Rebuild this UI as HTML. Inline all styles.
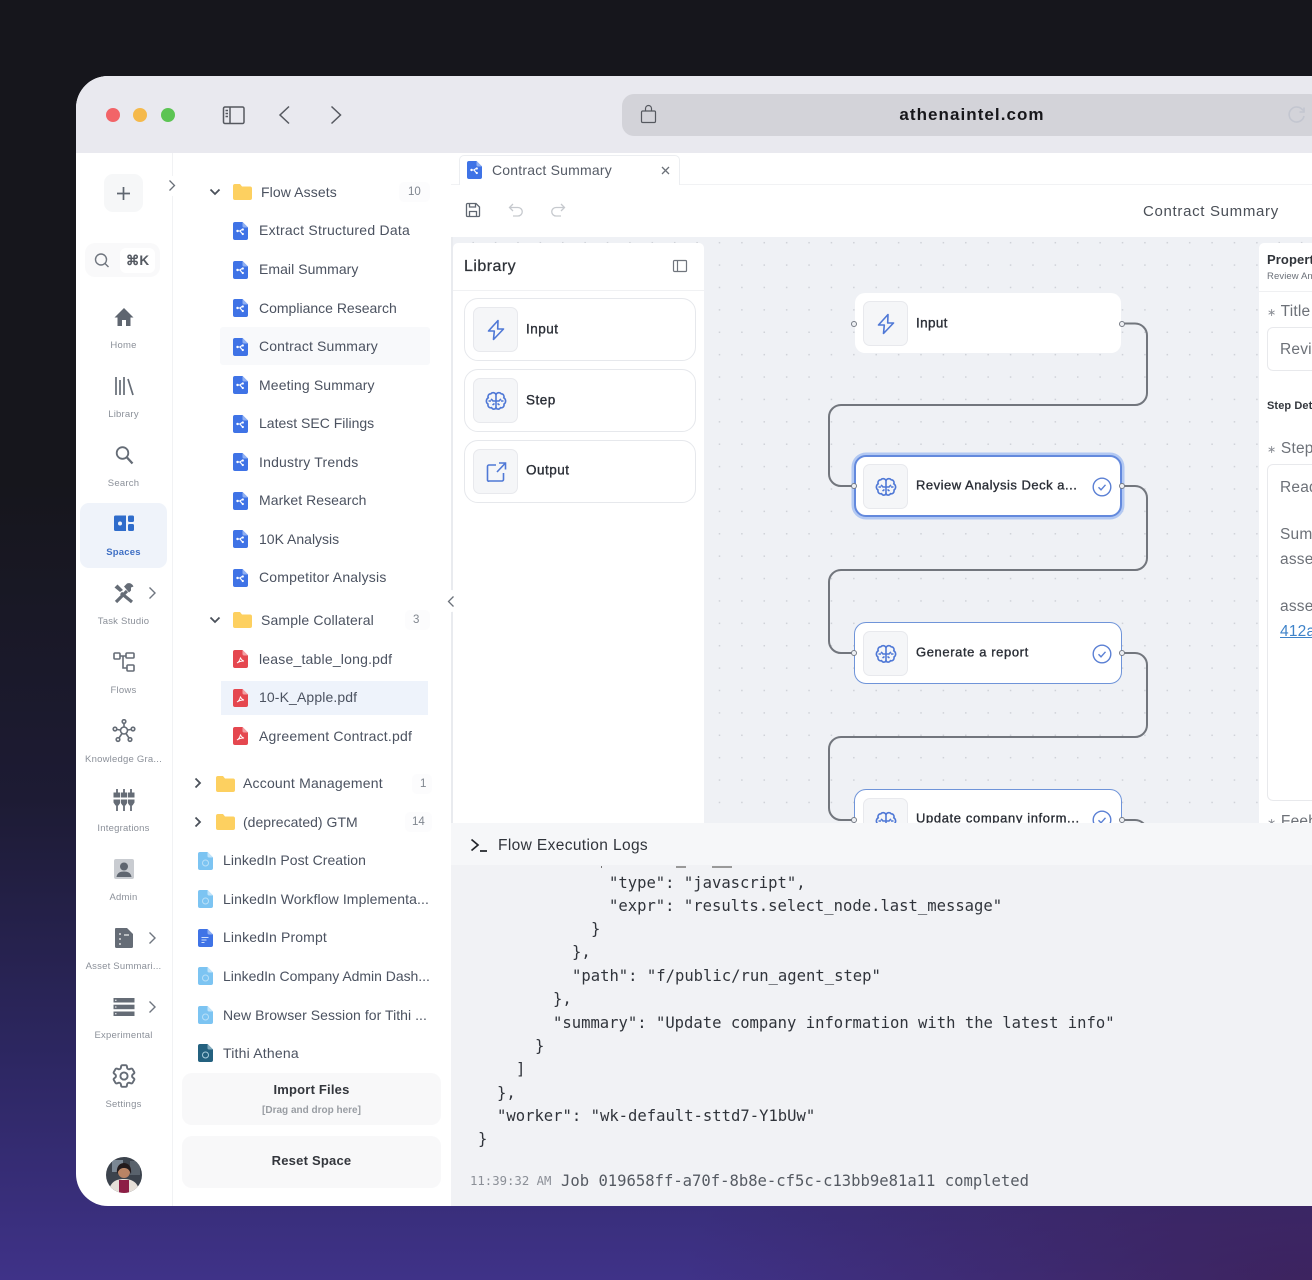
<!DOCTYPE html>
<html><head><meta charset="utf-8"><style>
*{box-sizing:border-box;margin:0;padding:0}
html,body{width:1312px;height:1280px;overflow:hidden;background:#16161c}
body{position:relative;font-family:"Liberation Sans",sans-serif;
background:radial-gradient(900px 420px at 1312px 1290px,rgba(60,30,80,.75),rgba(60,30,80,0) 70%),linear-gradient(180deg,#16161c 0,#16161c 480px,#1d1b34 800px,#2d2762 1060px,#3f3288 1280px)}
.a{position:absolute}
#win{position:absolute;left:76px;top:76px;width:1236px;height:1130px;border-radius:32px 0 0 32px;overflow:hidden;background:#fff}
#page{position:absolute;left:-76px;top:-76px;width:1312px;height:1280px;filter:blur(.3px)}
.t{position:absolute;white-space:nowrap;line-height:20px;height:20px;transform:translateY(-10px);font-size:14px;letter-spacing:.1px;color:#4b5260}
.lb{position:absolute;white-space:nowrap;font-size:9.5px;letter-spacing:.22px;line-height:12px;color:#8b9099;transform:translate(-50%,-5px);left:123.5px}
.ni{position:absolute;left:111.5px;width:24px;height:24px;transform:translateY(-12px);fill:none;stroke:#656c76;stroke-width:1.6}
.ch{position:absolute;width:12px;height:12px;transform:translateY(-6px);fill:none;stroke:#4a505a;stroke-width:1.8}
.nc{position:absolute;left:147px;width:10px;height:14px;transform:translateY(-7px);fill:none;stroke:#6f7680;stroke-width:1.4}
.f{position:absolute;width:15px;height:18px;transform:translateY(-9px)}
.fo{position:absolute;width:19px;height:16px;transform:translateY(-8px)}
.c{position:absolute;font-size:11.5px;line-height:14px;color:#80868f;transform:translateY(-7px)}
.chip{position:absolute;height:20px;background:#fcfcfd;border-radius:5px;transform:translateY(-10px)}
.lib{position:absolute;left:464px;width:232px;height:63px;border:1px solid #e6e8ec;border-radius:14px;background:#fff}
.box{position:absolute;width:45px;height:45px;background:#f5f6f8;border:1px solid #e8e9ed;border-radius:7px}
.box svg{position:absolute;left:10px;top:10px;width:24px;height:24px;fill:none;stroke:#4f78d6;stroke-width:1.6}
.bt{position:absolute;white-space:nowrap;font-size:13.5px;letter-spacing:.5px;color:#2a2e36;line-height:20px;transform:translateY(-9.5px);-webkit-text-stroke:.35px #2a2e36}
.node{position:absolute;left:854px;width:268px;height:62px;background:#fff;border:1px solid #6f94d9;border-radius:12px}
.h{position:absolute;width:6px;height:6px;border-radius:50%;background:#eef0f4;border:1.4px solid #777c85;transform:translate(-50%,-50%)}
.ok{position:absolute;left:1092px;width:20px;height:20px;transform:translateY(-10px);fill:none;stroke:#5b80d4;stroke-width:1.4}
.log{position:absolute;white-space:pre;font-family:"DejaVu Sans Mono",monospace;font-size:15.55px;line-height:20px;height:20px;transform:translateY(-10px);color:#30343b}
.p{position:absolute;white-space:nowrap;font-size:15.5px;letter-spacing:.2px;color:#6d7178;line-height:20px;transform:translateY(-9px)}
</style></head><body>
<svg width="0" height="0" style="position:absolute"><defs>
<symbol id="doc" viewBox="0 0 15 18"><path d="M2 0h7.500L15 5.500V16a2 2 0 0 1-2 2H2a2 2 0 0 1-2-2V2a2 2 0 0 1 2-2z" fill="#3f73e6"/><path d="M9.500 0L15 5.500H11a1.500 1.500 0 0 1-1.500-1.500z" fill="#8fb0f3"/><path d="M4.500 9h2.500l2 -1.500M7 9l2 2.500" stroke="#fff" stroke-width="1.100" fill="none"/><circle cx="4.500" cy="9" r="1.200" fill="#fff"/><circle cx="9.800" cy="7.500" r="1.100" fill="#fff"/><circle cx="9.800" cy="12" r="1.100" fill="#fff"/></symbol>
<symbol id="pdf" viewBox="0 0 15 18"><path d="M2 0h7.500L15 5.500V16a2 2 0 0 1-2 2H2a2 2 0 0 1-2-2V2a2 2 0 0 1 2-2z" fill="#e5474f"/><path d="M9.500 0L15 5.500H11a1.500 1.500 0 0 1-1.500-1.500z" fill="#f3a0a4"/><path d="M4 13c2-1 3-3 3.500-5.500.5 2 1.500 3 3.500 3.500-2.500 0-5 .5-7 2z" stroke="#fff" stroke-width=".9" fill="none"/></symbol>
<symbol id="lt" viewBox="0 0 15 18"><path d="M2 0h7.500L15 5.500V16a2 2 0 0 1-2 2H2a2 2 0 0 1-2-2V2a2 2 0 0 1 2-2z" fill="#7cc4f2"/><path d="M9.500 0L15 5.500H11a1.500 1.500 0 0 1-1.500-1.500z" fill="#c2e4fa"/><circle cx="7.500" cy="11" r="3" fill="none" stroke="#b9e0f8" stroke-width="1"/></symbol>
<symbol id="pr" viewBox="0 0 15 18"><path d="M2 0h7.500L15 5.500V16a2 2 0 0 1-2 2H2a2 2 0 0 1-2-2V2a2 2 0 0 1 2-2z" fill="#3f73e6"/><path d="M9.500 0L15 5.500H11a1.500 1.500 0 0 1-1.500-1.500z" fill="#8fb0f3"/><path d="M3.500 8.500h7M3.500 11h5M3.500 13.500h3" stroke="#cfe0fb" stroke-width="1"/></symbol>
<symbol id="tt" viewBox="0 0 15 18"><path d="M2 0h7.500L15 5.500V16a2 2 0 0 1-2 2H2a2 2 0 0 1-2-2V2a2 2 0 0 1 2-2z" fill="#24617f"/><path d="M9.500 0L15 5.500H11a1.500 1.500 0 0 1-1.500-1.500z" fill="#7fa9bd"/><circle cx="7.500" cy="11" r="3" fill="none" stroke="#a8cddd" stroke-width="1"/></symbol>
<symbol id="folder" viewBox="0 0 19 16"><path d="M2 0h5l2 2.500h8a2 2 0 0 1 2 2V14a2 2 0 0 1-2 2H2a2 2 0 0 1-2-2V2a2 2 0 0 1 2-2z" fill="#fdd060"/></symbol>
<symbol id="bolt" viewBox="0 0 24 24"><path d="M14 2.500L4.500 13h5.800L9.500 21.500 19.500 11h-5.800z" stroke-linejoin="round"/></symbol>
<symbol id="brain" viewBox="0 0 24 24"><path d="M12 5.500C11 3.500 8 3 6.800 4.800 4.500 4.800 3.500 7 4.200 8.800 2 10 1.600 13.500 4 15c-.5 2.500 1.500 4.300 3.500 3.700C8.800 20.800 11.500 20.500 12 18.500c.5 2 3.200 2.300 4.500.2 2 .6 4-1.200 3.500-3.700 2.400-1.500 2-5-.2-6.200.7-1.800-.3-4-2.600-4C16 3 13 3.500 12 5.500z"/><path d="M12 5.500v13M12 12H9L7 10M12 12h3l2-2M4.500 12H7M19.500 12H17M8.500 16l2-1.500M15.500 16l-2-1.500"/></symbol>
<symbol id="out" viewBox="0 0 24 24"><path d="M12 5H5a1.500 1.500 0 0 0-1.500 1.500V20A1 1 0 0 0 5 21h13a1.500 1.500 0 0 0 1.500-1.500V13M13 12L21 3.500M15 3h6.500v6.500"/></symbol>
<symbol id="check" viewBox="0 0 20 20"><circle cx="10" cy="10" r="8.800"/><path d="M6.500 10.300l2.500 2.500 4.500-5"/></symbol>
</defs></svg>
<div id="win"><div id="page">

<!-- browser chrome -->
<div class="a" style="left:76px;top:76px;width:1236px;height:77px;background:#e9e9ef"></div>
<div class="a" style="left:106px;top:108px;width:14px;height:14px;border-radius:50%;background:#f26468"></div>
<div class="a" style="left:133px;top:108px;width:14px;height:14px;border-radius:50%;background:#f5b94b"></div>
<div class="a" style="left:161px;top:108px;width:14px;height:14px;border-radius:50%;background:#5cc453"></div>
<svg class="a" style="left:222px;top:105px" width="24" height="20" fill="none" stroke="#55585f" stroke-width="1.500"><rect x="1.500" y="2" width="20.500" height="16.500" rx="1.500"/><path d="M8 2v16.500M3.500 5.500h2.500M3.500 8.500h2.500M3.500 11.500h2.500"/></svg>
<svg class="a" style="left:277px;top:104px" width="14" height="22" fill="none" stroke="#55585f" stroke-width="1.500"><path d="M12 2.500L3 11l9 8.500"/></svg>
<svg class="a" style="left:329px;top:104px" width="14" height="22" fill="none" stroke="#55585f" stroke-width="1.500"><path d="M2.500 2.500l9 8.500-9 8.500"/></svg>
<div class="a" style="left:622px;top:94px;width:700px;height:42px;border-radius:12px;background:#d3d3d9"></div>
<svg class="a" style="left:640px;top:104px" width="17" height="20" fill="none" stroke="#55585f" stroke-width="1.200"><rect x="1.500" y="7" width="14" height="11.500" rx="1.200"/><path d="M5.500 7V4.500a3 3 0 0 1 6 0V7"/></svg>
<div class="a" style="left:872px;top:104px;width:200px;height:22px;text-align:center;font-size:17px;line-height:22px;font-weight:700;letter-spacing:1.050px;color:#17171b">athenaintel.com</div>
<svg class="a" style="left:1287px;top:106px" width="20" height="18" fill="none" stroke="#c3c6d0" stroke-width="1.600"><path d="M16 4.500A7.500 7.500 0 1 0 17 10M17 1.500V6h-4.500"/></svg>

<!-- sidebar -->
<div class="a" style="left:172px;top:153px;width:1px;height:1053px;background:#f1f2f4"></div>
<div class="a" style="left:104px;top:174px;width:39px;height:38px;border-radius:9px;background:#f6f7f8"></div>
<svg class="a" style="left:116px;top:186px" width="15" height="15" stroke="#5f6670" stroke-width="1.700"><path d="M7.500 1v13M1 7.500h13"/></svg>
<div class="a" style="left:166px;top:176px;width:14px;height:20px;background:#fff;border-radius:7px"></div>
<svg class="a" style="left:168px;top:179px" width="8" height="13" fill="none" stroke="#6a7079" stroke-width="1.300"><path d="M1.500 1.500l5 5-5 5"/></svg>
<div class="a" style="left:85px;top:243px;width:75px;height:34px;border-radius:10px;background:#f9f9fa"></div>
<div class="a" style="left:120px;top:248px;width:35px;height:25px;border-radius:6px;background:#fff"></div>
<svg class="a" style="left:94px;top:252px" width="16" height="17" fill="none" stroke="#70767f" stroke-width="1.400"><circle cx="7" cy="7.500" r="5.500"/><path d="M11 11.500l3.500 3.500"/></svg>
<div class="a" style="left:120px;top:252px;width:35px;text-align:center;font-size:13.5px;line-height:18px;font-weight:700;color:#555a62">⌘K</div>

<div class="a" style="left:80px;top:503px;width:87px;height:65px;border-radius:9px;background:#eff3fa"></div>

<svg class="ni" style="top:317px" viewBox="0 0 24 24"><path d="M12 3L2.500 12.500H5.500V21H10v-6h4v6h4.500v-8.500h3z" fill="#5f6670" stroke="none"/></svg>
<div class="lb" style="top:345px">Home</div>
<svg class="ni" style="top:386px" viewBox="0 0 24 24"><path d="M4 3v18M8 6v15M12 3v18M16 5l5 16" stroke-width="1.700"/></svg>
<div class="lb" style="top:414px">Library</div>
<svg class="ni" style="top:455px" viewBox="0 0 24 24"><circle cx="10.500" cy="10" r="5.800" stroke-width="1.800"/><path d="M15 14.500l5.500 6" stroke-width="2.300"/></svg>
<div class="lb" style="top:483px">Search</div>
<svg class="ni" style="top:524px" viewBox="0 0 24 24"><path d="M2 5a1.500 1.500 0 0 1 1.500-1.500H14V19H3.500A1.500 1.500 0 0 1 2 17.500z" fill="#2f6ccb" stroke="none"/><circle cx="8" cy="11.500" r="2" fill="#eff3fa" stroke="none"/><rect x="16" y="3.500" width="6" height="6.500" rx="1.500" fill="#2f6ccb" stroke="none"/><rect x="16" y="12" width="6" height="7" rx="1.500" fill="#2f6ccb" stroke="none"/></svg>
<div class="lb" style="top:552px;color:#3f6fc4;font-weight:700">Spaces</div>
<svg class="ni" style="top:593px" viewBox="0 0 24 24"><path d="M4 21L15 10" stroke-width="3.200"/><path d="M11 9L5.500 3.500 2.500 6.500 8 11" fill="#656c76" stroke="none"/><path d="M9 12L20 21" stroke-width="3.200"/><path d="M12 5.500l3-3c2-.8 5-.2 6.500 3l-2.500 1v3l-2 2-5-6z" fill="#656c76" stroke="none"/></svg>
<svg class="nc" style="top:593px" viewBox="0 0 10 14"><path d="M2.500 1.500l5.500 5.500-5.500 5.500"/></svg>
<div class="lb" style="top:621px">Task Studio</div>
<svg class="ni" style="top:662px" viewBox="0 0 24 24" stroke-width="1.500"><rect x="2" y="3" width="6" height="6" rx="1"/><rect x="14" y="3" width="8" height="5" rx="1"/><rect x="15" y="15" width="7" height="6" rx="1"/><path d="M8 6h6M11 6v12h4"/></svg>
<div class="lb" style="top:690px">Flows</div>
<svg class="ni" style="top:731px" viewBox="0 0 24 24" stroke-width="1.500"><circle cx="12" cy="11.500" r="3.500"/><circle cx="12" cy="2.500" r="1.800"/><circle cx="3" cy="10" r="1.800"/><circle cx="21" cy="10" r="1.800"/><circle cx="6" cy="20.500" r="1.800"/><circle cx="18" cy="20.500" r="1.800"/><path d="M12 4.500v3.500M5 10.500l3.500 .5M19 10.500l-3.500 .5M7 19l3-4.500M17 19l-3-4.500"/></svg>
<div class="lb" style="top:759px">Knowledge Gra...</div>
<svg class="ni" style="top:800px" viewBox="0 0 24 24"><path d="M5 1v5M12 1v5M19 1v5M5 17v6M12 17v6M19 17v6" stroke-width="1.800"/><path d="M1.500 4.500h7v5h-7zM8.500 4.500h7v5h-7zM15.500 4.500h7v5h-7z" fill="#656c76" stroke="none"/><path d="M1.500 11.500h7v3l-2 3h-3l-2-3zM8.500 11.500h7v3l-2 3h-3l-2-3zM15.500 11.500h7v3l-2 3h-3l-2-3z" fill="#656c76" stroke="none"/><path d="M8.500 4.500v13M15.500 4.500v13" stroke="#fff" stroke-width=".8"/></svg>
<div class="lb" style="top:828px">Integrations</div>
<svg class="ni" style="top:869px" viewBox="0 0 24 24"><rect x="2" y="2" width="20" height="20" rx="2" fill="#c9ccd1" stroke="none"/><circle cx="12" cy="9.500" r="4" fill="#5f6670" stroke="none"/><path d="M4.500 20c.5-4 3.500-5.500 7.500-5.500s7 1.500 7.500 5.500z" fill="#5f6670" stroke="none"/></svg>
<div class="lb" style="top:897px">Admin</div>
<svg class="ni" style="top:938px" viewBox="0 0 24 24"><path d="M4 2h11l6 6v12.500A1.500 1.500 0 0 1 19.500 22h-15A1.500 1.500 0 0 1 3 20.500V3A1 1 0 0 1 4 2z" fill="#656c76" stroke="none"/><path d="M8 7v2M8 12v2M8 17v2M12 9h5" stroke="#eee" stroke-width="1.300"/></svg>
<svg class="nc" style="top:938px" viewBox="0 0 10 14"><path d="M2.500 1.500l5.500 5.500-5.500 5.500"/></svg>
<div class="lb" style="top:966px">Asset Summari...</div>
<svg class="ni" style="top:1007px" viewBox="0 0 24 24"><rect x="1.500" y="3" width="21" height="4.500" fill="#656c76" stroke="none"/><rect x="1.500" y="9.700" width="21" height="4.500" fill="#656c76" stroke="none"/><rect x="1.500" y="16.500" width="21" height="4.500" fill="#656c76" stroke="none"/><path d="M3 5.200h1.500M3 12h1.500M3 18.700h1.500" stroke="#fff" stroke-width="1"/></svg>
<svg class="nc" style="top:1007px" viewBox="0 0 10 14"><path d="M2.500 1.500l5.500 5.500-5.500 5.500"/></svg>
<div class="lb" style="top:1035px">Experimental</div>
<svg class="ni" style="top:1076px" viewBox="2 2 20 20" stroke-width="1.300"><path d="M9.594 3.940c.09-.542.56-.94 1.110-.94h2.593c.55 0 1.020.398 1.110.94l.213 1.281c.063.374.313.686.645.870.074.040.147.083.22.127.325.196.72.257 1.075.124l1.217-.456a1.125 1.125 0 0 1 1.370.490l1.296 2.247a1.125 1.125 0 0 1-.26 1.431l-1.003.827c-.293.241-.438.613-.43.992a7.723 7.723 0 0 1 0 .255c-.008.378.137.75.43.991l1.004.827c.424.35.534.955.26 1.430l-1.298 2.247a1.125 1.125 0 0 1-1.369.491l-1.217-.456c-.355-.133-.75-.072-1.076.124a6.470 6.470 0 0 1-.22.128c-.331.183-.581.495-.644.869l-.213 1.281c-.09.543-.56.94-1.110.94h-2.594c-.55 0-1.019-.398-1.110-.94l-.213-1.281c-.062-.374-.312-.686-.644-.870a6.520 6.520 0 0 1-.22-.127c-.325-.196-.72-.257-1.076-.124l-1.217.456a1.125 1.125 0 0 1-1.369-.490l-1.297-2.247a1.125 1.125 0 0 1 .26-1.431l1.004-.827c.292-.24.437-.613.43-.991a6.932 6.932 0 0 1 0-.255c.007-.38-.138-.751-.43-.992l-1.004-.827a1.125 1.125 0 0 1-.26-1.430l1.297-2.247a1.125 1.125 0 0 1 1.370-.491l1.216.456c.356.133.751.072 1.076-.124.072-.044.146-.086.22-.128.332-.183.582-.495.644-.869l.214-1.280z"/><circle cx="12" cy="12" r="3"/></svg>
<div class="lb" style="top:1104px">Settings</div>

<svg class="a" style="left:106px;top:1157px" width="36" height="36" viewBox="0 0 36 36"><defs><clipPath id="av"><circle cx="18" cy="18" r="18"/></clipPath></defs><g clip-path="url(#av)"><rect width="36" height="36" fill="#3c434d"/><rect x="6" y="3" width="11" height="12" fill="#7b8794"/><rect x="24" y="4" width="10" height="14" fill="#59626c"/><path d="M3 36c0-9 5-14 15-14s15 5 15 14z" fill="#e6dfd8"/><rect x="13" y="23" width="10" height="13" fill="#8d1e45"/><circle cx="18" cy="15" r="6" fill="#b98465"/><path d="M11 17c-1-9 4-11 7-11s8 2 7 11c-2-5-4-6-7-6s-5 1-7 6z" fill="#221a1c"/></g></svg>

<!-- tree -->
<div class="a" style="left:220px;top:327px;width:210px;height:38px;background:#f8f9fb;border-radius:3px"></div>
<div class="a" style="left:221px;top:681px;width:207px;height:34px;background:#eef3fb"></div>
<svg class="ch" style="left:209px;top:192px"><path d="M1.500 3.500L6 8l4.500-4.500"/></svg>
<svg class="fo" style="left:233px;top:192px"><use href="#folder"/></svg>
<div class="t" style="left:261px;top:192px">Flow Assets</div><div class="chip" style="left:399px;top:192px;width:31px"></div><div class="c" style="left:408px;top:192px">10</div>
<svg class="f" style="left:233px;top:231px"><use href="#doc"/></svg><div class="t" style="left:259px;top:230px;letter-spacing:.24px">Extract Structured Data</div>
<svg class="f" style="left:233px;top:270px"><use href="#doc"/></svg><div class="t" style="left:259px;top:269px;letter-spacing:.05px">Email Summary</div>
<svg class="f" style="left:233px;top:308px"><use href="#doc"/></svg><div class="t" style="left:259px;top:308px;letter-spacing:0">Compliance Research</div>
<svg class="f" style="left:233px;top:347px"><use href="#doc"/></svg><div class="t" style="left:259px;top:346px;letter-spacing:.14px">Contract Summary</div>
<svg class="f" style="left:233px;top:385px"><use href="#doc"/></svg><div class="t" style="left:259px;top:385px;letter-spacing:.14px">Meeting Summary</div>
<svg class="f" style="left:233px;top:424px"><use href="#doc"/></svg><div class="t" style="left:259px;top:423px;letter-spacing:0">Latest SEC Filings</div>
<svg class="f" style="left:233px;top:462px"><use href="#doc"/></svg><div class="t" style="left:259px;top:462px;letter-spacing:.2px">Industry Trends</div>
<svg class="f" style="left:233px;top:501px"><use href="#doc"/></svg><div class="t" style="left:259px;top:500px;letter-spacing:.06px">Market Research</div>
<svg class="f" style="left:233px;top:539px"><use href="#doc"/></svg><div class="t" style="left:259px;top:539px;letter-spacing:0">10K Analysis</div>
<svg class="f" style="left:233px;top:578px"><use href="#doc"/></svg><div class="t" style="left:259px;top:577px;letter-spacing:.2px">Competitor Analysis</div>
<svg class="ch" style="left:209px;top:620px"><path d="M1.500 3.500L6 8l4.500-4.500"/></svg>
<svg class="fo" style="left:233px;top:620px"><use href="#folder"/></svg>
<div class="t" style="left:261px;top:620px;letter-spacing:.14px">Sample Collateral</div><div class="chip" style="left:405px;top:620px;width:25px"></div><div class="c" style="left:413px;top:620px">3</div>
<svg class="f" style="left:233px;top:659px"><use href="#pdf"/></svg><div class="t" style="left:259px;top:659px;letter-spacing:.2px">lease_table_long.pdf</div>
<svg class="f" style="left:233px;top:698px"><use href="#pdf"/></svg><div class="t" style="left:259px;top:697px;letter-spacing:.12px">10-K_Apple.pdf</div>
<svg class="f" style="left:233px;top:736px"><use href="#pdf"/></svg><div class="t" style="left:259px;top:736px;letter-spacing:.2px">Agreement Contract.pdf</div>
<svg class="ch" style="left:192px;top:783px"><path d="M3.500 1.500L8 6l-4.500 4.500"/></svg>
<svg class="fo" style="left:216px;top:784px"><use href="#folder"/></svg>
<div class="t" style="left:243px;top:783px;letter-spacing:.2px">Account Management</div><div class="chip" style="left:412px;top:784px;width:20px"></div><div class="c" style="left:420px;top:784px">1</div>
<svg class="ch" style="left:192px;top:822px"><path d="M3.500 1.500L8 6l-4.500 4.500"/></svg>
<svg class="fo" style="left:216px;top:822px"><use href="#folder"/></svg>
<div class="t" style="left:243px;top:822px;letter-spacing:.02px">(deprecated) GTM</div><div class="chip" style="left:405px;top:822px;width:27px"></div><div class="c" style="left:412px;top:822px">14</div>
<svg class="f" style="left:198px;top:861px"><use href="#lt"/></svg><div class="t" style="left:223px;top:860px;letter-spacing:.06px">LinkedIn Post Creation</div>
<svg class="f" style="left:198px;top:899px"><use href="#lt"/></svg><div class="t" style="left:223px;top:899px;letter-spacing:.1px">LinkedIn Workflow Implementa...</div>
<svg class="f" style="left:198px;top:938px"><use href="#pr"/></svg><div class="t" style="left:223px;top:937px;letter-spacing:.13px">LinkedIn Prompt</div>
<svg class="f" style="left:198px;top:976px"><use href="#lt"/></svg><div class="t" style="left:223px;top:976px;letter-spacing:-.03px">LinkedIn Company Admin Dash...</div>
<svg class="f" style="left:198px;top:1015px"><use href="#lt"/></svg><div class="t" style="left:223px;top:1015px;letter-spacing:.05px">New Browser Session for Tithi ...</div>
<svg class="f" style="left:198px;top:1053px"><use href="#tt"/></svg><div class="t" style="left:223px;top:1053px;letter-spacing:.2px">Tithi Athena</div>
<div class="a" style="left:182px;top:1073px;width:259px;height:52px;border-radius:10px;background:#f8f8f9"></div>
<div class="a" style="left:182px;top:1080px;width:259px;text-align:center;font-size:13px;line-height:20px;font-weight:700;letter-spacing:.2px;color:#33363c">Import Files</div>
<div class="a" style="left:182px;top:1104px;width:259px;text-align:center;font-size:10px;line-height:14px;font-weight:700;color:#999da3">[Drag and drop here]</div>
<div class="a" style="left:182px;top:1136px;width:259px;height:52px;border-radius:10px;background:#f8f8f9"></div>
<div class="a" style="left:182px;top:1151px;width:259px;text-align:center;font-size:13px;line-height:20px;font-weight:700;letter-spacing:.22px;color:#33363c">Reset Space</div>

<!-- tabs + toolbar -->
<div class="a" style="left:451px;top:153px;width:861px;height:32px;background:#fff;border-bottom:1px solid #f1f2f4"></div>
<div class="a" style="left:459px;top:155px;width:221px;height:30px;background:#fff;border:1px solid #eceef1;border-bottom:0;border-radius:5px 5px 0 0"></div>
<svg class="f" style="left:467px;top:170px"><use href="#doc"/></svg>
<div class="t" style="left:492px;top:170px;color:#555b66;letter-spacing:.2px">Contract Summary</div>
<svg class="a" style="left:660px;top:165px" width="11" height="11" stroke="#6c7179" stroke-width="1.300"><path d="M2 2l7 7M9 2l-7 7"/></svg>
<svg class="a" style="left:465px;top:202px" width="16" height="16" fill="none" stroke="#5f6670" stroke-width="1.300"><path d="M2.500 1.500h8.500l3.500 3.500v8.500a1 1 0 0 1-1 1h-11a1 1 0 0 1-1-1v-11a1 1 0 0 1 1-1z"/><path d="M4.500 1.500v3.500h6V1.500M4.500 14.500V9.500h7v5"/></svg>
<svg class="a" style="left:508px;top:203px" width="16" height="15" fill="none" stroke="#c6c9ce" stroke-width="1.300"><path d="M5 1L1.500 4.500 5 8M1.500 4.500H10a4 4 0 0 1 0 8.500H5"/></svg>
<svg class="a" style="left:550px;top:203px" width="16" height="15" fill="none" stroke="#c6c9ce" stroke-width="1.300"><path d="M11 1l3.500 3.500L11 8M14.500 4.500H6a4 4 0 0 0 0 8.500h5"/></svg>
<div class="t" style="left:1143px;top:212px;font-size:15px;color:#4a4f57;letter-spacing:.68px">Contract Summary</div>

<!-- canvas -->
<div class="a" style="left:451px;top:237px;width:861px;height:586px;background-color:#eff1f5;background-image:radial-gradient(circle,#cfd2d8 .7px,transparent 1px);background-size:22.400px 22.400px;background-position:11px -5.500px"></div>
<div class="a" style="left:451px;top:237px;width:2px;height:586px;background:#e9ebef"></div>
<div class="a" style="left:453px;top:243px;width:251px;height:580px;background:#fff;border-radius:5px 5px 0 0"></div>
<div class="a" style="left:453px;top:290px;width:251px;height:1px;background:#f0f1f3"></div>
<div class="t" style="left:464px;top:267px;font-size:16px;letter-spacing:.45px;color:#2e3238;-webkit-text-stroke:.25px #2e3238">Library</div>
<svg class="a" style="left:672px;top:259px" width="16" height="14" fill="none" stroke="#70757d" stroke-width="1.200"><rect x="1.500" y="1.500" width="13" height="11" rx="1"/><path d="M5.500 1.500v11"/></svg>
<div class="lib" style="top:298px"></div><div class="box" style="left:473px;top:307px"><svg><use href="#bolt"/></svg></div><div class="bt" style="left:526px;top:329px">Input</div>
<div class="lib" style="top:369px"></div><div class="box" style="left:473px;top:378px"><svg><use href="#brain"/></svg></div><div class="bt" style="left:526px;top:399.500px">Step</div>
<div class="lib" style="top:440px"></div><div class="box" style="left:473px;top:449px"><svg><use href="#out"/></svg></div><div class="bt" style="left:526px;top:470px">Output</div>

<svg class="a" style="left:820px;top:300px" width="340" height="523" fill="none" stroke="#72767d" stroke-width="2"><path d="M302 23.500h13a12 12 0 0 1 12 12V93a12 12 0 0 1-12 12H21A12 12 0 0 0 9 117v57a12 12 0 0 0 12 12H34"/><path d="M302 186h13a12 12 0 0 1 12 12V258a12 12 0 0 1-12 12H21A12 12 0 0 0 9 282v59a12 12 0 0 0 12 12H34"/><path d="M302 353h13a12 12 0 0 1 12 12V425a12 12 0 0 1-12 12H21A12 12 0 0 0 9 449v59a12 12 0 0 0 12 12H34"/><path d="M302 520h13a12 12 0 0 1 12 12"/></svg>

<div class="node" style="left:855px;top:293px;width:266px;height:60px;border:0;border-radius:10px"></div>
<div class="box" style="left:863px;top:301px"><svg><use href="#bolt"/></svg></div><div class="bt" style="left:916px;top:323px;font-size:13.500px;letter-spacing:.35px">Input</div>
<div class="h" style="left:854px;top:323.500px"></div><div class="h" style="left:1122px;top:323.500px"></div>

<div class="node" style="left:854px;top:455px;width:268px;height:62px;border:2px solid #6389dd;box-shadow:0 0 0 2.500px #b2c8f2;border-radius:12px"></div>
<div class="box" style="left:863px;top:464px"><svg><use href="#brain"/></svg></div><div class="bt" style="left:916px;top:485px;font-size:13px;letter-spacing:.5px">Review Analysis Deck a...</div>
<svg class="ok" style="top:486.500px"><use href="#check"/></svg>
<div class="h" style="left:854px;top:486px"></div><div class="h" style="left:1122px;top:486px"></div>

<div class="node" style="top:622px"></div>
<div class="box" style="left:863px;top:631px"><svg><use href="#brain"/></svg></div><div class="bt" style="left:916px;top:652px;font-size:13px;letter-spacing:.6px">Generate a report</div>
<svg class="ok" style="top:653.500px"><use href="#check"/></svg>
<div class="h" style="left:854px;top:653px"></div><div class="h" style="left:1122px;top:653px"></div>

<div class="node" style="top:789px"></div>
<div class="box" style="left:863px;top:798px"><svg><use href="#brain"/></svg></div><div class="bt" style="left:916px;top:818px;font-size:13px;letter-spacing:.62px">Update company inform...</div>
<svg class="ok" style="top:820px"><use href="#check"/></svg>
<div class="h" style="left:854px;top:820px"></div><div class="h" style="left:1122px;top:820px"></div>

<!-- properties -->
<div class="a" style="left:1259px;top:243px;width:53px;height:580px;background:#fff;border-radius:5px 0 0 0"></div>
<div class="a" style="left:1259px;top:291px;width:53px;height:1px;background:#eff0f2"></div>
<div class="t" style="left:1267px;top:260px;font-size:13px;font-weight:700;color:#30343a">Propert</div>
<div class="t" style="left:1267px;top:276.500px;font-size:9.500px;color:#6b7078">Review An</div>
<div class="p" style="left:1267px;top:311px"><span style="font-size:11px;color:#8b8f96">∗</span> Title</div>
<div class="a" style="left:1267px;top:327px;width:60px;height:44px;border:1px solid #e8e9ec;border-radius:6px"></div>
<div class="p" style="left:1280px;top:349px">Revie</div>
<div class="t" style="left:1267px;top:405.500px;font-size:11px;font-weight:700;color:#33373d">Step Det</div>
<div class="p" style="left:1267px;top:448px"><span style="font-size:11px;color:#8b8f96">∗</span> Step</div>
<div class="a" style="left:1267px;top:464px;width:60px;height:337px;border:1px solid #e8e9ec;border-radius:6px"></div>
<div class="p" style="left:1280px;top:487px">Read</div>
<div class="p" style="left:1280px;top:534px">Sum</div>
<div class="p" style="left:1280px;top:559px">asse</div>
<div class="p" style="left:1280px;top:606px">asse</div>
<div class="p" style="left:1280px;top:631px;color:#3f83c9;text-decoration:underline">412a</div>
<div class="p" style="left:1267px;top:821px"><span style="font-size:11px;color:#8b8f96">∗</span> Feeb</div>

<!-- logs -->
<div class="a" style="left:451px;top:823px;width:861px;height:383px;background:#f1f2f5"></div>
<div class="a" style="left:451px;top:823px;width:861px;height:42px;background:#f6f7f9"></div>
<div class="a" style="left:601px;top:866px;width:1px;height:2px;background:#777"></div>
<div class="a" style="left:676px;top:866px;width:10px;height:1.500px;background:#999"></div>
<div class="a" style="left:712px;top:866px;width:20px;height:1.500px;background:#999"></div>
<svg class="a" style="left:470px;top:838px" width="18" height="15" fill="none" stroke="#23262b" stroke-width="1.700"><path d="M1.500 1.500L8 7l-6.500 5.500M10 13h7"/></svg>
<div class="t" style="left:498px;top:846px;font-size:15.500px;letter-spacing:.37px;color:#30343b">Flow Execution Logs</div>
<div class="log" style="left:609px;top:882.500px">"type": "javascript",</div>
<div class="log" style="left:609px;top:906px">"expr": "results.select_node.last_message"</div>
<div class="log" style="left:591px;top:928.500px">}</div>
<div class="log" style="left:572px;top:952px">},</div>
<div class="log" style="left:572px;top:976px">"path": "f/public/run_agent_step"</div>
<div class="log" style="left:553px;top:999px">},</div>
<div class="log" style="left:553px;top:1022.500px">"summary": "Update company information with the latest info"</div>
<div class="log" style="left:535px;top:1045.500px">}</div>
<div class="log" style="left:516px;top:1069px">]</div>
<div class="log" style="left:497px;top:1092.500px">},</div>
<div class="log" style="left:497px;top:1115.500px">"worker": "wk-default-sttd7-Y1bUw"</div>
<div class="log" style="left:478px;top:1139px">}</div>
<div class="log" style="left:470px;top:1181px;font-size:12.300px;color:#8b8f97">11:39:32 AM</div>
<div class="log" style="left:561px;top:1180.500px;color:#555a62">Job 019658ff-a70f-8b8e-cf5c-c13bb9e81a11 completed</div>

<div class="a" style="left:444px;top:590px;width:14px;height:22px;background:#fff;border-radius:7px"></div>
<svg class="a" style="left:447px;top:595px" width="8" height="13" fill="none" stroke="#6a7079" stroke-width="1.300"><path d="M6.500 1.500l-5 5 5 5"/></svg>
</div></div>
</body></html>
